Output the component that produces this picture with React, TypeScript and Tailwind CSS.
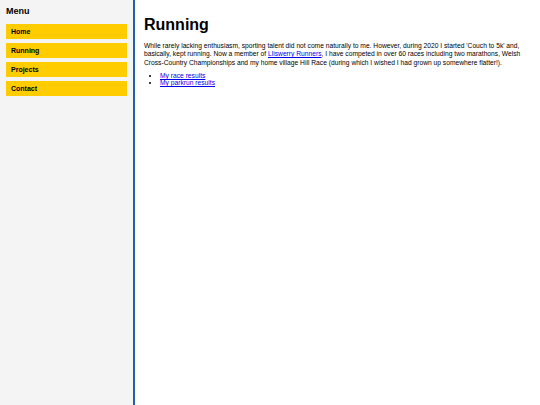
const links = ["Home", "Running", "Projects", "Contact"];

export default function App() {
  return (
    <div className="flex h-[405px] w-[540px] bg-white font-['Liberation_Sans',Arial,sans-serif] text-black">
      <aside className="w-[135px] shrink-0 border-r-2 border-[#1f5fae] bg-[#f4f4f4] px-[6px] pt-[6px]">
        <h3 className="text-[9px] font-bold leading-[10px]">Menu</h3>
        <nav className="mt-[8px] flex flex-col gap-[4px]">
          {links.map((l) => (
            <a
              key={l}
              href="#"
              className="flex h-[15px] w-[121px] items-center bg-[#ffcc00] px-[5px] text-[7px] font-bold leading-none text-black"
            >
              {l}
            </a>
          ))}
        </nav>
      </aside>
      <main className="flex-1 pl-[9px] pr-[4px] pt-[16px]">
        <h1 className="text-[16px] font-bold leading-[18px]">Running</h1>
        <p className="mt-[8px] text-[6.7px] leading-[8.3px]">
          While rarely lacking enthusiasm, sporting talent did not come naturally to me. However, during 2020 I started
          'Couch to 5k' and, basically, kept running. Now a member of{" "}
          <a href="#" className="text-[#0000ee] underline">
            Lliswerry Runners
          </a>
          , I have competed in over 60 races including two marathons, Welsh Cross-Country Championships and my home
          village Hill Race (during which I wished I had grown up somewhere flatter!).
        </p>
        <ul className="mt-[5px] list-disc pl-[16px] text-[6.7px] leading-[7.5px]">
          <li>
            <a href="#" className="text-[#0000ee] underline">
              My race results
            </a>
          </li>
          <li>
            <a href="#" className="text-[#0000ee] underline">
              My parkrun results
            </a>
          </li>
        </ul>
      </main>
    </div>
  );
}
